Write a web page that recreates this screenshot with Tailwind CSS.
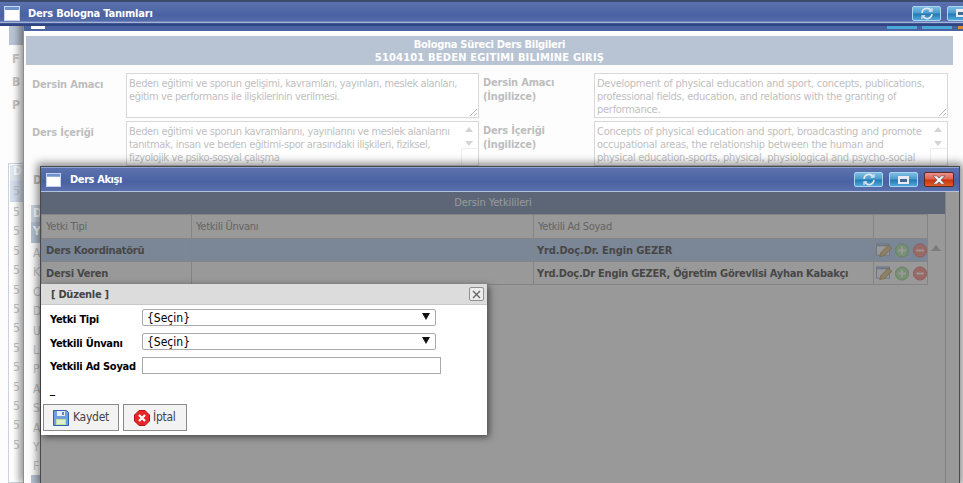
<!DOCTYPE html>
<html lang="tr">
<head>
<meta charset="UTF-8" />
<title>Ders Akışı</title>
<script src="https://cdn.jsdelivr.net/npm/@tailwindcss/browser@4"></script>
</head>
<body class="[font-family:'DejaVu_Sans_Condensed','Liberation_Sans',sans-serif] text-[11px] leading-[13px] tracking-[-0.27px] bg-white">
<div class="relative w-[963px] h-[483px] overflow-hidden bg-[#fdfdfd]">

  <!-- back window, only its left edge shows -->
  <section class="absolute left-0 top-[26px] w-[24px] h-[457px] bg-[#fdfdfd] text-[#c4c4c4] font-bold text-[12px]">
    <div class="ml-[9px] h-[19px] bg-[#b8c4d4]"></div>
    <div class="flex flex-col gap-[9px] pl-[12px] pt-[7px] leading-[14px]">
      <p>F</p><p>B</p><p>P</p>
    </div>
    <div class="absolute left-[8px] top-[137px] w-[20px] h-[320px] border border-[#c9d2de] bg-white font-normal">
      <div class="h-[16px] mt-[1px] ml-[1px] pl-[3px] bg-[#dfe6f0] text-white font-bold">D</div>
      <div class="h-[21px] ml-[1px] pl-[3px] pt-[4px] bg-[#d3deee]">5</div>
      <div class="flex flex-col ml-[1px] pl-[3px] pt-[3px] gap-[5.4px] leading-[14px]">
        <p>5</p><p>5</p><p>5</p><p>5</p><p>5</p><p>5</p><p>5</p><p>5</p><p>5</p><p>5</p><p>5</p><p>5</p><p>5</p>
      </div>
    </div>
  </section>

  <!-- Ders Bologna window, second in the stack -->
  <section class="absolute left-[23px] top-[7px] w-[945px] h-[476px] bg-[#fdfdfd] border-l border-[#8c8c8c] shadow-[-4px_0_7px_rgba(0,0,0,0.4)]">
    <div class="relative h-[26px] bg-[#4a62a2] border-b-2 border-white">
      <div class="absolute left-[7px] top-[19px] w-[14px] h-[3px] bg-white"></div>
      <div class="absolute left-[863px] top-[19px] w-[30px] h-[3px] bg-[#4aa8d8]"></div>
      <div class="absolute left-[898px] top-[19px] w-[30px] h-[3px] bg-[#4aa8d8]"></div>
      <div class="absolute left-[934px] top-[19px] w-[11px] h-[3px] bg-[#e08a30]"></div>
    </div>
    <div class="ml-[2px] mt-[3px] w-[927px] h-[29px] pt-[2px] bg-[#b8c4d4] text-white font-bold text-center">
      <p class="tracking-[-0.28px]">Bologna Süreci Ders Bilgileri</p>
      <p class="tracking-[0.2px]">5104101 BEDEN EGITIMI BILIMINE GIRIŞ</p>
    </div>
    <div class="flex flex-col gap-[3px] mt-[8px] text-[#c0c0c0]">
      <div class="flex">
        <p class="w-[102px] pl-[8px] pt-[5px] font-bold tracking-[-0.2px] leading-[14px] text-[#bdbdbd]">Dersin Amacı</p>
        <div class="relative w-[353px] h-[45px] pl-[2px] pr-[3px] pt-[3px] border border-[#d8d8d8] bg-white tracking-[-0.37px]">
          Beden eğitimi ve sporun gelişimi, kavramları, yayınları, meslek alanları, eğitim ve performans ile ilişkilerinin verilmesi.
          <svg class="absolute right-[1px] bottom-[1px]" width="7" height="7" viewBox="0 0 7 7"><path d="M0 7 7 0M4 7 7 4" stroke="#bbb"/></svg>
        </div>
        <p class="w-[115px] pl-[4px] pt-[3px] font-bold tracking-[-0.2px] leading-[14px] text-[#bdbdbd]">Dersin Amacı (İngilizce)</p>
        <div class="relative w-[354px] h-[45px] pl-[2px] pr-[3px] pt-[3px] border border-[#d8d8d8] bg-white">
          Development of physical education and sport, concepts, publications, professional fields, education, and relations with the granting of performance.
          <svg class="absolute right-[1px] bottom-[1px]" width="7" height="7" viewBox="0 0 7 7"><path d="M0 7 7 0M4 7 7 4" stroke="#bbb"/></svg>
        </div>
      </div>
      <div class="flex">
        <p class="w-[102px] pl-[8px] pt-[5px] font-bold tracking-[-0.2px] leading-[14px] text-[#bdbdbd]">Ders İçeriği</p>
        <div class="relative w-[353px] h-[45px] pl-[2px] pr-[18px] pt-[3px] border border-[#d8d8d8] bg-white tracking-[-0.37px]">
          Beden eğitimi ve sporun kavramlarını, yayınlarını ve meslek alanlarını<br />tanıtmak, insan ve beden eğitimi-spor arasındaki ilişkileri, fiziksel,<br />fizyolojik ve psiko-sosyal çalışma
          <svg class="absolute right-[5px] top-[5px]" width="8" height="20" viewBox="0 0 8 20"><path d="M0 5 4 0l4 5zM0 14h8l-4 5z" fill="#d4d4d4"/></svg>
          <div class="absolute right-0 top-[26px] bottom-0 w-[17px] border-t border-l border-[#eeeeee]"></div>
        </div>
        <p class="w-[115px] pl-[4px] pt-[3px] font-bold tracking-[-0.2px] leading-[14px] text-[#bdbdbd]">Ders İçeriği (İngilizce)</p>
        <div class="relative w-[354px] h-[45px] pl-[2px] pr-[18px] pt-[3px] border border-[#d8d8d8] bg-white">
          Concepts of physical education and sport, broadcasting and promote<br />occupational areas, the relationship between the human and<br />physical education-sports, physical, physiological and psycho-social
          <svg class="absolute right-[5px] top-[5px]" width="8" height="20" viewBox="0 0 8 20"><path d="M0 5 4 0l4 5zM0 14h8l-4 5z" fill="#d4d4d4"/></svg>
          <div class="absolute right-0 top-[26px] bottom-0 w-[17px] border-t border-l border-[#eeeeee]"></div>
        </div>
      </div>
      <p class="pl-[9px] pt-[5px] font-bold text-[12px] text-[#bdbdbd]">Ders</p>
    </div>
    <!-- table behind the top window -->
    <div class="absolute left-[7px] top-[198px] w-[16px] text-[12px] text-[#c4c4c4] font-bold">
      <div class="h-[17px] pl-[2px] pt-[2px] bg-[#ccd5e2] text-white">D</div>
      <div class="h-[21px] pl-[2px] pt-[3px] bg-[#b8c4d4] text-white">Y</div>
      <div class="flex flex-col pl-[2px] pt-[3px] gap-[5.4px] leading-[14px] font-normal">
        <p>A</p><p>K</p><p>C</p><p>D</p><p>U</p><p>L</p><p>P</p><p>A</p><p>S</p><p>A</p><p>Y</p><p>F</p>
      </div>
      <div class="mt-[2px] h-[8px] bg-[#b8c4d4]"></div>
    </div>
  </section>

  <!-- top title bar of the Ders Bologna window -->
  <header class="absolute left-0 top-0 w-full h-[26px] flex items-center border-t-2 border-b-2 border-t-[#3c4a6e] border-b-[#2f4480] bg-[linear-gradient(#5b72ae,#4a62a2_60%,#556cab_88%,#a5b5da_90%,#a5b5da_94%,#3f5692_95%)]">
    <svg class="ml-[4px]" width="16" height="15" viewBox="0 0 16 15"><rect x=".5" y=".5" width="15" height="14" fill="#fff" stroke="#c9d6ec"/><rect x="1" y="1" width="14" height="3" fill="#6f93cf"/></svg>
    <h1 class="ml-[8px] text-white font-bold tracking-[-0.2px]">Ders Bologna Tanımları</h1>
    <div class="ml-auto flex gap-[6px] -mr-[13px]">
      <button class="w-[29px] h-[15px] flex items-center justify-center rounded-[2px] border border-[#a8d6f0] bg-[linear-gradient(#7dbde2,#4b9ccf_45%,#237ab4_55%,#52a8dc)]">
        <svg width="14" height="13" viewBox="0 0 14 13" fill="none" stroke="#e4e8ee" stroke-width="1.6"><path d="M2 6a5 5 0 0 1 9-2.6M12 7a5 5 0 0 1-9 2.6"/><path d="M12 1v3.2H8.8M2 12V8.8h3.2" stroke-width="1.2"/></svg>
      </button>
      <button class="w-[29px] h-[15px] flex items-center justify-center rounded-[2px] border border-[#a8d6f0] bg-[linear-gradient(#7dbde2,#4b9ccf_45%,#237ab4_55%,#52a8dc)]">
        <span class="block w-[11px] h-[8px] border-2 border-t-[3px] border-[#e8ecf2] bg-[#3f6a94]"></span>
      </button>
    </div>
  </header>

  <!-- Ders Akışı window -->
  <section class="absolute left-[40px] top-[166px] w-[920px] h-[317px] bg-white border-t border-x border-[#4a4a4a] shadow-[0_0_8px_3px_rgba(0,0,0,0.45)]">
    <div class="h-[25px] flex items-center border-t border-b border-t-[#8ea2cf] border-b-[#b4c2e2] bg-[linear-gradient(#5b72ae,#4a62a2_60%,#5a70ac)]">
      <svg class="ml-[5px]" width="15" height="14" viewBox="0 0 16 15"><rect x=".5" y=".5" width="15" height="14" fill="#fff" stroke="#c9d6ec"/><rect x="1" y="1" width="14" height="3" fill="#6f93cf"/></svg>
      <h2 class="ml-[9px] text-white font-bold tracking-[-0.4px]">Ders Akışı</h2>
      <div class="ml-auto flex gap-[6px] mr-[5px]">
        <button class="w-[29px] h-[15px] flex items-center justify-center rounded-[2px] border border-[#a8d6f0] bg-[linear-gradient(#7dbde2,#4b9ccf_45%,#237ab4_55%,#52a8dc)]">
          <svg width="14" height="13" viewBox="0 0 14 13" fill="none" stroke="#e4e8ee" stroke-width="1.6"><path d="M2 6a5 5 0 0 1 9-2.6M12 7a5 5 0 0 1-9 2.6"/><path d="M12 1v3.2H8.8M2 12V8.8h3.2" stroke-width="1.2"/></svg>
        </button>
        <button class="w-[29px] h-[15px] flex items-center justify-center rounded-[2px] border border-[#a8d6f0] bg-[linear-gradient(#7dbde2,#4b9ccf_45%,#237ab4_55%,#52a8dc)]">
          <span class="block w-[11px] h-[8px] border-2 border-t-[3px] border-[#e8ecf2] bg-[#3f6a94]"></span>
        </button>
        <button class="w-[30px] h-[15px] flex items-center justify-center rounded-[2px] border border-[#5b2a22] bg-[linear-gradient(#f0908a,#e06050_45%,#c8340f_55%,#e65a22)]">
          <svg width="16" height="10" viewBox="0 0 16 10"><path d="M2 .8h3.500L8 3l2.500-2.200H14L10 5l4 4.200h-3.500L8 7 5.500 9.200H2L6 5z" fill="#f2f2f2" stroke="#6b5a66" stroke-width=".8"/></svg>
        </button>
      </div>
    </div>

    <!-- panel under the modal mask -->
    <div class="w-[905px] h-[291px] border-r border-[#d8d8d8]">
      <div class="h-[22px] pt-[4px] text-center text-white bg-[#99aac5] tracking-[-0.1px]">Dersin Yetkilileri</div>
      <div class="flex">
        <table class="w-[887px] table-fixed border-collapse">
          <thead>
            <tr class="h-[24px] text-left text-[#a8a8a8]">
              <th class="w-[150px] pl-[4px] font-normal border border-[#dcdcdc]">Yetki Tipi</th>
              <th class="w-[342px] pl-[4px] font-normal border border-[#dcdcdc]">Yetkili Ünvanı</th>
              <th class="w-[340px] pl-[4px] font-normal border border-[#dcdcdc]">Yetkili Ad Soyad</th>
              <th class="border border-[#dcdcdc]"></th>
            </tr>
          </thead>
          <tbody class="font-bold tracking-[-0.27px] text-[#777777]">
            <tr class="h-[23px] bg-[#cde0fa]">
              <td class="pl-[4px] border border-[#dcdcdc]">Ders Koordinatörü</td>
              <td class="border border-[#dcdcdc]"></td>
              <td class="pl-[3px] border border-[#dcdcdc] tracking-[-0.1px]">Yrd.Doç.Dr. Engin GEZER</td>
              <td class="border border-[#dcdcdc]">
                <div class="flex items-center gap-[2px] pl-[2px]">
                  <svg width="18" height="16" viewBox="0 0 18 16"><rect x=".5" y="1.500" width="14" height="12" fill="#fff" stroke="#b4c4dc"/><rect x="1" y="2" width="13" height="2" fill="#b4c4dc"/><path d="M4 15 5 11l8-8 4 3-8 8z" fill="#e8d4a8" stroke="#c0a878" stroke-width=".7"/></svg>
                  <svg width="15" height="15" viewBox="0 0 15 15"><circle cx="7.500" cy="7.500" r="7" fill="#c8f0c0" stroke="#a8d8a0"/><path d="M7.500 3.500v8M3.500 7.500h8" stroke="#fff" stroke-width="2"/></svg>
                  <svg width="15" height="15" viewBox="0 0 15 15" class="ml-[2px]"><circle cx="7.500" cy="7.500" r="7" fill="#ffb0a8" stroke="#f09890"/><path d="M3.500 7.500h8" stroke="#fff" stroke-width="2"/></svg>
                </div>
              </td>
            </tr>
            <tr class="h-[23px] bg-white">
              <td class="pl-[4px] border border-[#dcdcdc]">Dersi Veren</td>
              <td class="border border-[#dcdcdc]"></td>
              <td class="pl-[3px] border border-[#dcdcdc] whitespace-nowrap">Yrd.Doç.Dr Engin GEZER, Öğretim Görevlisi Ayhan Kabakçı</td>
              <td class="border border-[#dcdcdc]">
                <div class="flex items-center gap-[2px] pl-[2px]">
                  <svg width="18" height="16" viewBox="0 0 18 16"><rect x=".5" y="1.500" width="14" height="12" fill="#fff" stroke="#b4c4dc"/><rect x="1" y="2" width="13" height="2" fill="#b4c4dc"/><path d="M4 15 5 11l8-8 4 3-8 8z" fill="#e8d4a8" stroke="#c0a878" stroke-width=".7"/></svg>
                  <svg width="15" height="15" viewBox="0 0 15 15"><circle cx="7.500" cy="7.500" r="7" fill="#c8f0c0" stroke="#a8d8a0"/><path d="M7.500 3.500v8M3.500 7.500h8" stroke="#fff" stroke-width="2"/></svg>
                  <svg width="15" height="15" viewBox="0 0 15 15" class="ml-[2px]"><circle cx="7.500" cy="7.500" r="7" fill="#ffb0a8" stroke="#f09890"/><path d="M3.500 7.500h8" stroke="#fff" stroke-width="2"/></svg>
                </div>
              </td>
            </tr>
          </tbody>
        </table>
        <div class="flex-1 pt-[31px] pl-[3px]">
          <svg width="10" height="6" viewBox="0 0 10 6"><path d="M0 6 5 0l5 6z" fill="#cfcfcf"/></svg>
        </div>
      </div>
    </div>

    <!-- modal mask over the panel -->
    <div class="absolute left-0 top-[25px] w-full h-[292px] bg-black/40"></div>

    <!-- Düzenle dialog -->
    <form class="absolute left-0 top-[117px] w-[446px] h-[151px] bg-white shadow-[2px_2px_7px_rgba(0,0,0,0.55)]">
      <div class="relative h-[21px] pl-[10px] pt-[4px] bg-[#dcdcdc] border-b border-[#c8c8c8] font-bold text-[#444]">
        [ Düzenle ]
        <button type="button" class="absolute right-[3px] top-[3px] w-[15px] h-[14px] flex items-center justify-center rounded-[2px] border border-[#8f8f8f] bg-[#ececec]">
          <svg width="9" height="9" viewBox="0 0 9 9"><path d="M1 1l7 7M8 1 1 8" stroke="#666" stroke-width="1.400"/></svg>
        </button>
      </div>
      <div class="flex flex-col gap-[8px] pt-[4px] pl-[9px] font-bold text-black">
        <label class="flex items-center h-[16px]">
          <span class="w-[92px] pt-[4px]">Yetki Tipi</span>
          <span class="relative flex items-center w-[294px] h-[17px] pl-[4px] pt-[2px] border border-[#a9a9a9] rounded-[2px] font-normal text-[12px] tracking-normal">
            {Seçin}
            <svg class="absolute right-[5px] top-[3px]" width="8" height="7" viewBox="0 0 8 7"><path d="M0 0h8L4 7z" fill="#111"/></svg>
          </span>
        </label>
        <label class="flex items-center h-[16px]">
          <span class="w-[92px] pt-[4px]">Yetkili Ünvanı</span>
          <span class="relative flex items-center w-[294px] h-[17px] pl-[4px] pt-[2px] border border-[#a9a9a9] rounded-[2px] font-normal text-[12px] tracking-normal">
            {Seçin}
            <svg class="absolute right-[5px] top-[3px]" width="8" height="7" viewBox="0 0 8 7"><path d="M0 0h8L4 7z" fill="#111"/></svg>
          </span>
        </label>
        <label class="flex items-center h-[16px]">
          <span class="w-[92px] pt-[2px]">Yetkili Ad Soyad</span>
          <input type="text" class="w-[299px] h-[17px] border border-[#a9a9a9] bg-white" />
        </label>
      </div>
      <p class="pl-[9px] pt-[10px] text-black font-bold leading-[14px]">_</p>
      <div class="flex gap-[4px] pl-[2px] pt-[7px] text-[#444] text-[12px]">
        <button type="button" class="flex items-center gap-[4px] w-[76px] h-[27px] pl-[9px] border border-[#8a8a8a] bg-[#f3f3f3]">
          <svg width="16" height="16" viewBox="0 0 16 16"><path d="M.5.500h13l2 2v13H.5z" fill="#6f9fe0" stroke="#2f62b0"/><rect x="4" y="1" width="8" height="5" fill="#e8eef8"/><rect x="9" y="2" width="2" height="3" fill="#5a88c8"/><rect x="3" y="9" width="10" height="6" fill="#bfe39a"/><path d="M4 11h8M4 13h8" stroke="#fff"/></svg>
          Kaydet
        </button>
        <button type="button" class="flex items-center gap-[3px] w-[64px] h-[27px] pl-[10px] border border-[#8a8a8a] bg-[#f3f3f3]">
          <svg width="16" height="16" viewBox="0 0 16 16"><path d="M5 .500h6L15.500 5v6L11 15.500H5L.5 11V5z" fill="#e8262a" stroke="#b01418"/><path d="M5 5l6 6M11 5l-6 6" stroke="#fff" stroke-width="2.200"/></svg>
          İptal
        </button>
      </div>
    </form>
  </section>
</div>
</body>
</html>
